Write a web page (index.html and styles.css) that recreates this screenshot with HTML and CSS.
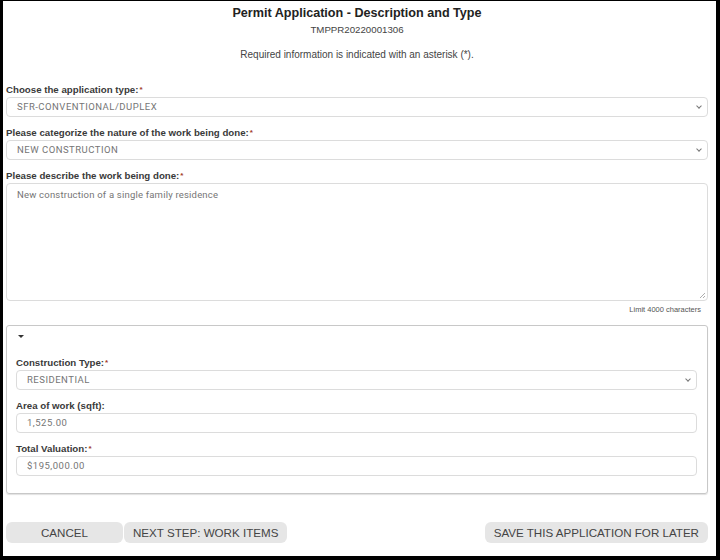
FILE: index.html
```html
<!DOCTYPE html>
<html lang="en">
<head>
  <meta charset="UTF-8" />
  <title>Permit Application - Description and Type</title>
  <link rel="stylesheet" href="styles.css">
</head>
<body>
  <div class="page">
    <div class="header">
      <h1>Permit Application - Description and Type</h1>
      <div class="app-id">TMPPR20220001306</div>
      <div class="required-note">Required information is indicated with an asterisk (*).</div>
    </div>

    <!-- Application type -->
    <label class="field-label">Choose the application type:<span class="req">*</span></label>
    <div class="select">SFR-CONVENTIONAL/DUPLEX<span class="chev"></span></div>

    <label class="field-label">Please categorize the nature of the work being done:<span class="req">*</span></label>
    <div class="select">NEW CONSTRUCTION<span class="chev"></span></div>

    <label class="field-label">Please describe the work being done:<span class="req">*</span></label>
    <div class="textarea">New construction of a single family residence
      <svg class="grip" width="7" height="7" viewBox="0 0 7 7"><path d="M6 1 L1 6 M6 4 L4 6" stroke="#999" stroke-width="0.8"/></svg>
    </div>
    <div class="limit">Limit 4000 characters</div>

    <!-- Details -->
    <div class="details">
      <div class="toggle"></div>
      <label class="field-label">Construction Type:<span class="req">*</span></label>
      <div class="select">RESIDENTIAL<span class="chev"></span></div>

      <label class="field-label">Area of work (sqft):</label>
      <div class="input">1,525.00</div>

      <label class="field-label">Total Valuation:<span class="req">*</span></label>
      <div class="input">$195,000.00</div>
    </div>

    <div class="actions">
      <button class="btn btn-cancel">CANCEL</button>
      <button class="btn">NEXT STEP: WORK ITEMS</button>
      <div class="spacer"></div>
      <button class="btn">SAVE THIS APPLICATION FOR LATER</button>
    </div>
  </div>
</body>
</html>
```

FILE: styles.css
```css
html, body {
  margin: 0;
  padding: 0;
  background: #000;
}
body {
  padding: 1px 4px 4px 3px;
  font-family: "Liberation Sans", Arial, sans-serif;
  color: #333;
}
.page {
  background: #fff;
  height: 555px;
  padding: 0 8px 0 3px;
  box-sizing: border-box;
  display: flex;
  flex-direction: column;
}
.header {
  text-align: center;
  padding-top: 5px;
}
h1 {
  margin: 0;
  font-size: 12.6px;
  line-height: 15px;
  color: #222;
}
.app-id {
  margin-top: 3px;
  font-size: 9.7px;
  line-height: 12px;
  color: #444;
}
.required-note {
  margin-top: 13px;
  font-size: 10px;
  line-height: 12px;
  color: #444;
}
.field-label {
  display: block;
  margin-top: 10px;
  margin-bottom: 1px;
  font-size: 9.7px;
  font-weight: bold;
  line-height: 12px;
  color: #3a3a3a;
}
.header + .field-label {
  margin-top: 23px;
}
.req {
  color: #a23b2a;
  font-size: 8px;
  vertical-align: top;
  margin-left: 1px;
}
.select, .input, .textarea {
  position: relative;
  border: 1px solid #dcdcdc;
  border-radius: 4px;
  background: #fff;
  font-family: Roboto, "Liberation Sans", sans-serif;
  font-size: 9.5px;
  color: #757575;
  letter-spacing: 0.5px;
  box-sizing: border-box;
}
.select, .input {
  height: 20px;
  line-height: 18px;
  padding-left: 10px;
}
.chev {
  position: absolute;
  right: 6px;
  top: 6px;
  width: 3px;
  height: 3px;
  border-right: 1px solid #777;
  border-bottom: 1px solid #777;
  transform: rotate(45deg);
}
.textarea {
  height: 118px;
  padding: 5px 10px;
  line-height: 12px;
  letter-spacing: 0.2px;
}
.grip {
  position: absolute;
  right: 1px;
  bottom: 1px;
}
.limit {
  text-align: right;
  font-size: 7.5px;
  line-height: 10px;
  margin-top: 4px;
  padding-right: 7px;
  color: #555;
}
.details {
  margin-top: 10px;
  border: 1px solid #c8c8c8;
  border-radius: 3px;
  box-shadow: 0 1px 1px rgba(0, 0, 0, 0.12);
  padding: 6px 10px 17px 9px;
}
.toggle {
  margin-left: 2px;
  margin-top: 3px;
  width: 0;
  height: 0;
  border-left: 3px solid transparent;
  border-right: 3px solid transparent;
  border-top: 3.5px solid #333;
}
.toggle + .field-label {
  margin-top: 19px;
}
.actions {
  display: flex;
  margin-top: 28px;
  gap: 1px;
}
.spacer {
  flex: 1;
}
.btn {
  height: 21px;
  border: none;
  border-radius: 6px;
  background: #e6e6e6;
  font-family: "Liberation Sans", Arial, sans-serif;
  font-size: 11.6px;
  color: #444;
  padding: 0 9px;
  cursor: pointer;
}
.btn-cancel {
  width: 117px;
}
```
